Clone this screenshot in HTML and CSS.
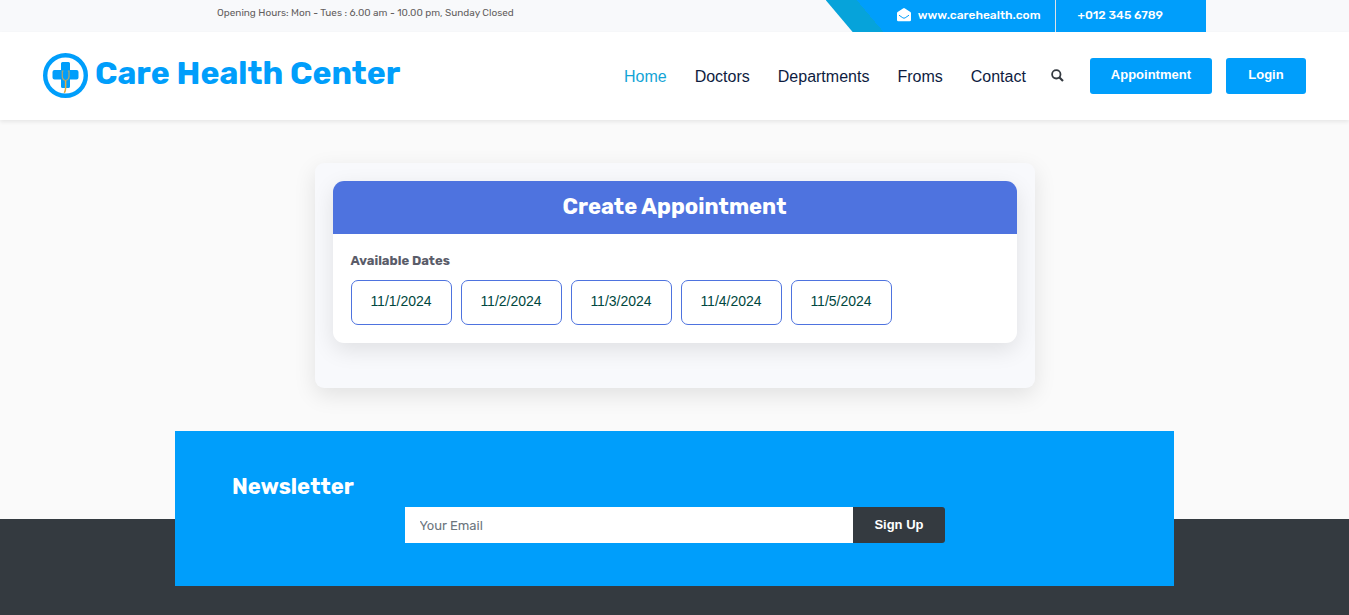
FILE: index.html
```html
<!DOCTYPE html>
<html lang="en">
<head>
<meta charset="utf-8">
<meta name="viewport" content="width=device-width, initial-scale=1">
<title>Care Health Center</title>
<link rel="stylesheet" href="styles.css">
</head>
<body>
<div class="topbar">
  <div class="topbar-inner">
    <p class="hours">Opening Hours: Mon - Tues : 6.00 am - 10.00 pm, Sunday Closed</p>
    <div class="contact-strip">
      <a class="site" href="#">
        <svg class="mail-icon" viewBox="0 0 14 14" aria-hidden="true"><path fill="#fff" d="M0 5.2Q0 4.500.6 4L6 .4Q7-.3 8 .4L13.400 4Q14 4.500 14 5.200V12Q14 13.300 12.700 13.300H1.300Q0 13.300 0 12Z"/><path fill="none" stroke="#009efb" stroke-width="1" d="M2 7.200 5.800 9.800Q7 10.600 8.200 9.800L12 7.200"/></svg>
        www.carehealth.com
      </a>
      <a class="phone" href="#">+012 345 6789</a>
    </div>
  </div>
</div>

<header class="header">
  <a class="brand" href="#">
    <svg class="logo" viewBox="0 0 45 45" aria-hidden="true">
      <circle cx="22.500" cy="22.500" r="20.300" fill="#fff" stroke="#009efb" stroke-width="4.400"/>
      <path fill="#009efb" d="M19.500 9H25.500Q27 9 27 10.500V17H33.500Q35.500 17 35.500 19V24.500Q35.500 26.500 33.500 26.500H27V33.500Q27 35 25.500 35H19.500Q18 35 18 33.500V26.500H11.500Q9.500 26.500 9.500 24.500V19Q9.500 17 11.500 17H18V10.500Q18 9 19.500 9Z"/>
      <path fill="none" stroke="#b5a568" stroke-width="1.200" d="M20.500 18H19.300V23.500Q19.500 27 22.500 27.500Q25.700 27 26 23.500V18H24.800"/>
      <path fill="none" stroke="#e5ad3c" stroke-width="1.500" d="M22.600 27.500V35Q22.700 37.500 21.300 39.800"/>
    </svg>
    <span class="brand-name">Care Health Center</span>
  </a>
  <nav class="nav">
    <a class="active" href="#">Home</a>
    <a href="#">Doctors</a>
    <a href="#">Departments</a>
    <a href="#">Froms</a>
    <a href="#">Contact</a>
  </nav>
  <button class="search" type="button" aria-label="Search">
    <svg viewBox="0 0 13 13" aria-hidden="true"><circle cx="5.300" cy="5.300" r="4.200" fill="none" stroke="#343a40" stroke-width="1.800"/><path d="M8.500 8.500 12 12" stroke="#343a40" stroke-width="2.200"/></svg>
  </button>
  <div class="actions">
    <button class="btn" type="button">Appointment</button>
    <button class="btn" type="button">Login</button>
  </div>
</header>

<main class="main">
  <section class="panel">
    <div class="card">
      <h1 class="card-title">Create Appointment</h1>
      <div class="card-body">
        <h2 class="label">Available Dates</h2>
        <div class="dates">
          <button class="date" type="button">11/1/2024</button>
          <button class="date" type="button">11/2/2024</button>
          <button class="date" type="button">11/3/2024</button>
          <button class="date" type="button">11/4/2024</button>
          <button class="date" type="button">11/5/2024</button>
        </div>
      </div>
    </div>
  </section>
</main>

<footer class="footer">
  <section class="newsletter">
    <h2 class="newsletter-title">Newsletter</h2>
    <form class="signup">
      <input type="email" placeholder="Your Email" aria-label="Your Email">
      <button class="btn btn-dark" type="button">Sign Up</button>
    </form>
  </section>
</footer>
</body>
</html>
```

FILE: styles.css
```css
*, *::before, *::after { box-sizing: border-box; }

html { height: 100%; }

body {
  margin: 0;
  min-height: 100%;
  display: flex;
  flex-direction: column;
  background: #fafafa;
  color: #5a5c69;
  font-family: Rubik, Roboto, sans-serif;
  font-size: 13px;
}

h1, h2, p { margin: 0; }
a { text-decoration: none; }
button, input { border: 0; font-family: inherit; }
button { cursor: pointer; }

.topbar { background: #f8f9fb; }

.topbar-inner {
  display: flex;
  justify-content: space-between;
  max-width: 1063px;
  margin: 0 auto;
  padding-left: 74px;
}

.hours {
  padding-top: 6px;
  font-size: 10px;
  line-height: 14px;
  color: #645f5f;
}

.contact-strip {
  display: flex;
  height: 32px;
  padding-left: 71px;
  background: linear-gradient(50deg, #06a3da 44px, #009efb 44px);
  clip-path: polygon(0 0, 100% 0, 100% 100%, 27px 100%);
  font-size: 12px;
  line-height: 30px;
  font-weight: 500;
}

.contact-strip a { color: #fff; }

.site {
  display: flex;
  gap: 7px;
  padding-right: 14px;
  border-right: 1px solid #dee2e6;
}

.mail-icon {
  width: 14px;
  height: 14px;
  margin-top: 8px;
}

.phone { padding: 0 43px 0 22px; }

.header {
  display: flex;
  align-items: center;
  height: 88px;
  padding: 0 43px;
  background: #fff;
  box-shadow: 0 2px 4px rgba(0, 0, 0, .08);
}

.brand {
  display: flex;
  align-items: center;
  gap: 7px;
  margin-right: auto;
  padding-bottom: 2px;
  color: #009efb;
  font-size: 32px;
  line-height: 40px;
  font-weight: 700;
}

.brand-name { padding-bottom: 4px; }

.logo { width: 45px; height: 45px; }

.nav {
  display: flex;
  gap: 28px;
  padding-top: 2px;
  font: 16px "Liberation Sans", Arial, sans-serif;
}

.nav a { color: #0e1c3f; }
.nav a.active { color: #13a4d6; }

.search {
  width: 13px;
  height: 13px;
  margin: 0 26px 2px 25px;
  padding: 0;
  background: none;
}

.search svg { display: block; width: 13px; height: 13px; }

.actions { display: flex; gap: 14px; }

.btn {
  min-width: 80px;
  height: 36px;
  padding: 0 21px 3px;
  border-radius: 3px;
  background: #009efb;
  color: #fff;
  font: bold 13px "Liberation Sans", Arial, sans-serif;
}

.main { padding: 43px 18px 131px; }

.panel {
  max-width: 720px;
  margin: 0 auto;
  padding: 18px 18px 45px;
  border-radius: 9px;
  background: #f8f9fc;
  box-shadow: 0 7px 22px rgba(0, 0, 0, .1);
}

.card {
  border-radius: 11px;
  background: #fff;
  box-shadow: 0 7px 22px rgba(0, 0, 0, .1);
}

.card-title {
  padding: 13px 18px 14px;
  border-radius: 11px 11px 0 0;
  background: #4e73df;
  color: #fff;
  font-size: 22px;
  line-height: 26px;
  text-align: center;
}

.card-body { padding: 18px; }

.label {
  margin-bottom: 10px;
  font-size: 13px;
  line-height: 18px;
}

.dates { display: flex; flex-wrap: wrap; gap: 9px; }

.date {
  width: 101px;
  height: 45px;
  padding: 0 0 3px;
  border: 1px solid #4e73df;
  border-radius: 7px;
  background: #fff;
  color: #00473e;
  font: 14px "Liberation Sans", Arial, sans-serif;
}

.footer {
  flex: 1;
  padding: 0 18px 29px;
  background: #343a40;
}

.newsletter {
  max-width: 999px;
  margin: -88px auto 0;
  padding: 43px 57px;
  background: #009efb;
}

.newsletter-title {
  margin-bottom: 7px;
  color: #fff;
  font-size: 22px;
  line-height: 26px;
}

.signup {
  display: flex;
  max-width: 540px;
  margin: 0 auto;
}

.signup input {
  flex: 1;
  min-width: 0;
  height: 36px;
  padding: 0 15px;
  background: #fff;
  font-size: 13px;
}

.signup input::placeholder { color: #6c757d; }

.btn-dark {
  padding-bottom: 1px;
  border-radius: 0 3px 3px 0;
  background: #343a40;
}
```
